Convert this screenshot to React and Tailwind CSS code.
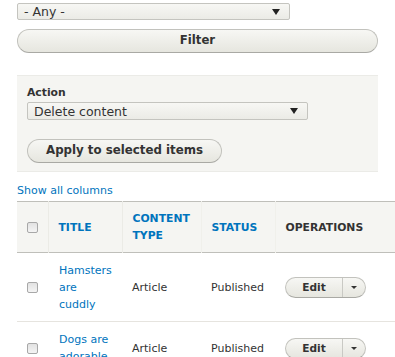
import React from "react";

const font = { fontFamily: '"DejaVu Sans", Verdana, sans-serif' };

function Select({ label, className }) {
  return (
    <div
      className={`flex items-center justify-between border border-[#c4c4bf] rounded-[2px] bg-gradient-to-b from-[#f7f7f4] to-[#ebebe6] pl-[6px] pr-[9px] text-[12.5px] leading-[15px] text-[#333] ${className}`}
    >
      <span>{label}</span>
      <span className="block w-0 h-0 border-l-[4px] border-r-[4px] border-t-[6px] border-l-transparent border-r-transparent border-t-[#222]" />
    </div>
  );
}

function Checkbox() {
  return (
    <span className="block w-[11px] h-[11px] rounded-[2px] border border-[#a8a8a8] bg-gradient-to-b from-[#e2e2e2] to-[#f4f4f4]" />
  );
}

function Button({ children, className }) {
  return (
    <div
      className={`flex items-center justify-center rounded-full border border-[#c2c2bd] border-b-[#a9a9a4] bg-gradient-to-b from-[#f7f7f4] to-[#e6e6df] font-bold text-[#333] ${className}`}
    >
      {children}
    </div>
  );
}

function DropButton() {
  return (
    <div className="flex w-[81px] h-[21px] rounded-full border border-[#c2c2bd] border-b-[#a9a9a4] bg-gradient-to-b from-[#f7f7f4] to-[#e6e6df] text-[#333] overflow-hidden">
      <div className="w-[57px] flex items-center justify-center font-bold text-[10.6px] border-r border-[#c9c9c4]">
        Edit
      </div>
      <div className="flex-1 flex items-center justify-center">
        <span className="block w-0 h-0 border-l-[3px] border-r-[3px] border-t-[3px] border-l-transparent border-r-transparent border-t-[#333]" />
      </div>
    </div>
  );
}

export default function App() {
  const rows = [
    { title: "Hamsters are cuddly" },
    { title: "Dogs are adorable" },
  ];
  return (
    <div className="w-[395px] h-[357px] overflow-hidden bg-white text-[#333]" style={font}>
      <div className="pl-[17px] pt-[3px]">
        <Select label="- Any -" className="w-[273px] h-[17px]" />
        <Button className="mt-[9px] w-[361px] h-[24px] text-[11.7px]">Filter</Button>

        <div className="mt-[22px] w-[361px] bg-[#f5f5f2] border-t border-b border-[#ebebe7] pt-[9px] pb-[8px] pl-[10px]">
          <div className="font-bold text-[10.8px] leading-[16px]">Action</div>
          <Select label="Delete content" className="mt-[1px] w-[281px] h-[18px]" />
          <Button className="mt-[19px] w-[195px] h-[24px] text-[11.8px]">
            Apply to selected items
          </Button>
        </div>

        <div className="mt-[11px] text-[11px] leading-[16px] text-[#0074bd]">Show all columns</div>

        <table className="mt-[2px] w-[378px] table-fixed border-collapse text-[11px] leading-[17px]">
          <colgroup>
            <col className="w-[31px]" />
            <col className="w-[74px]" />
            <col className="w-[79px]" />
            <col className="w-[74px]" />
            <col />
          </colgroup>
          <thead>
            <tr className="bg-[#f5f5f2] border-t border-b border-[#bfbfba]">
              <th className="pl-[10px] py-2 text-left align-middle">
                <Checkbox />
              </th>
              <th className="pl-[10px] pr-[8px] py-2 text-left font-bold text-[10.8px] text-[#0074bd] border-l border-[#ebebe6]">
                TITLE
              </th>
              <th className="pl-[10px] pr-[8px] py-2 text-left font-bold text-[10.8px] text-[#0074bd] border-l border-[#ebebe6]">
                CONTENT TYPE
              </th>
              <th className="pl-[10px] pr-[8px] py-2 text-left font-bold text-[10.8px] text-[#0074bd] border-l border-[#f0f0eb]">
                STATUS
              </th>
              <th className="pl-[10px] pr-[8px] py-2 text-left font-bold text-[10.8px] text-[#333] border-l border-[#f0f0eb]">
                OPERATIONS
              </th>
            </tr>
          </thead>
          <tbody>
            {rows.map((r, i) => (
              <tr key={i} className="border-b border-[#e6e4df]">
                <td className="pl-[10px] pt-[9px] pb-2 align-middle">
                  <Checkbox />
                </td>
                <td className="pl-[11px] pr-[8px] pt-[9px] pb-2 align-middle text-[#0074bd]">
                  {r.title}
                </td>
                <td className="pl-[10px] pt-[9px] pb-2 align-middle">Article</td>
                <td className="pl-[10px] pt-[9px] pb-2 align-middle">Published</td>
                <td className="pl-[10px] pt-[9px] pb-2 align-middle">
                  <DropButton />
                </td>
              </tr>
            ))}
          </tbody>
        </table>
      </div>
    </div>
  );
}
